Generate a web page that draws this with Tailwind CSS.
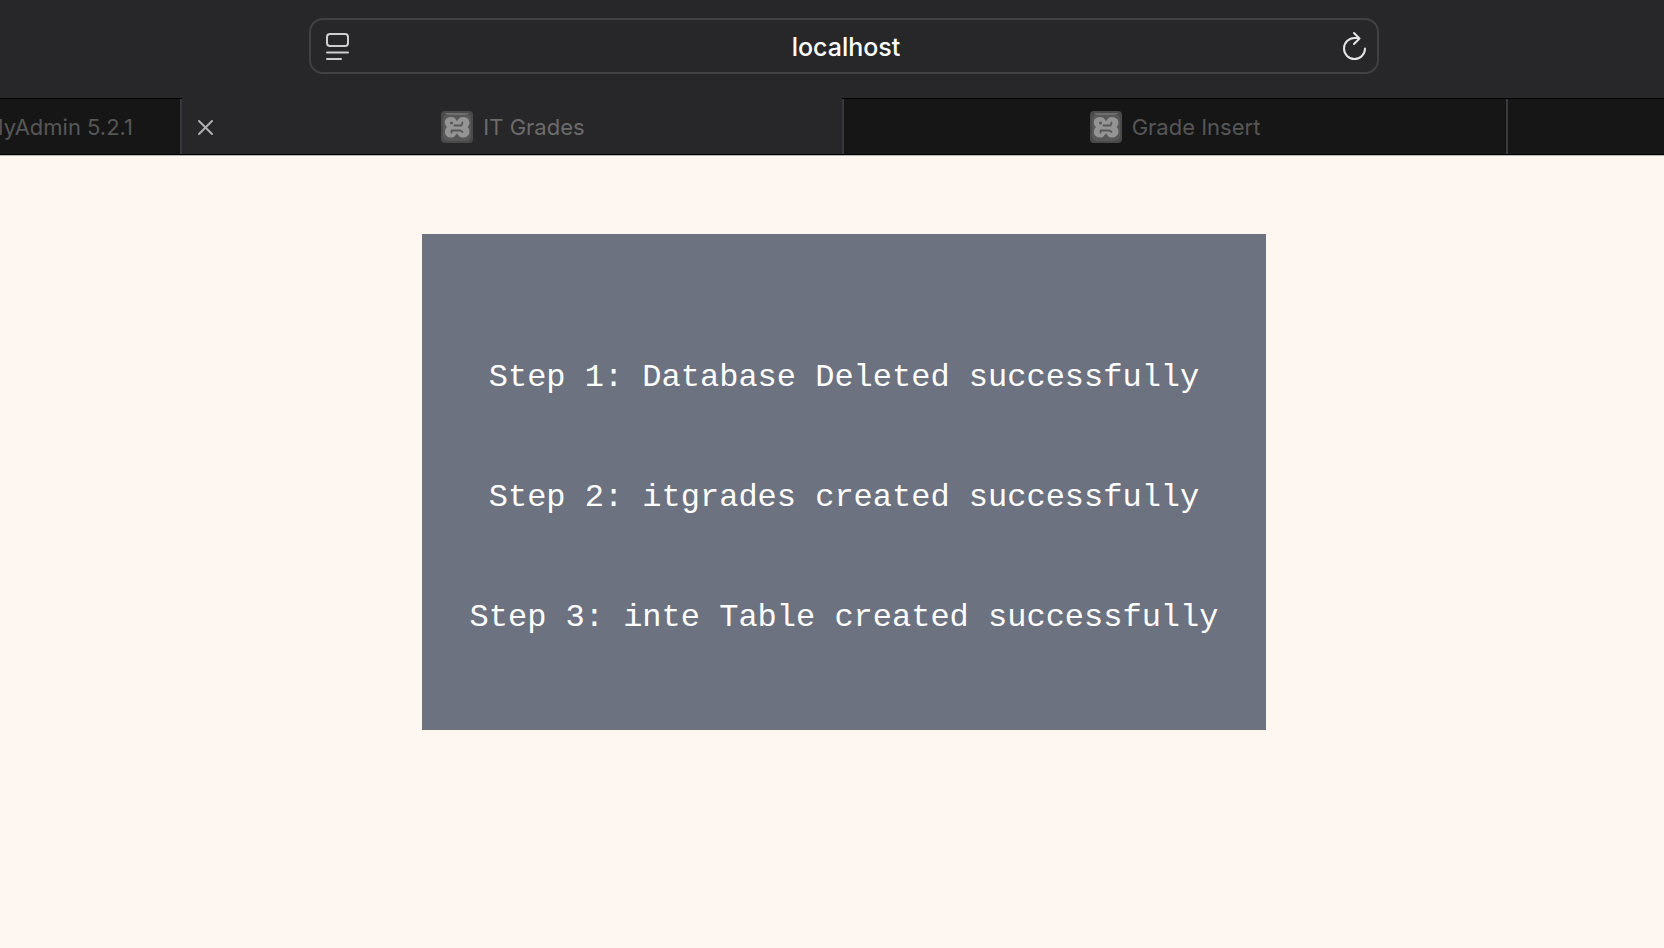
<!DOCTYPE html>
<html lang="en">
<head>
<meta charset="utf-8">
<title>IT Grades</title>
<script src="https://cdn.jsdelivr.net/npm/@tailwindcss/browser@4"></script>
</head>
<body class="bg-[#fef6f1] overflow-x-hidden min-h-screen font-['Inter',sans-serif]">
<svg class="hidden" aria-hidden="true">
  <symbol id="xampp" viewBox="0 0 32 32">
    <rect width="32" height="32" rx="4" fill="#4a4a4b"/>
    <rect x="2" y="3" width="28" height="27" rx="5" fill="#585859"/>
    <path d="M4 2H28Q27 4 24 4H8Q5 4 4 2Z" fill="#6e6e6f"/>
    <path d="M10 6C13.500 6 15 8 16 10.500C17 8 19 6 22 6C29 6 30 13 26.500 16C30 19 29 26.500 22 26.500C18.500 26.500 17.500 24.500 16 22C14.500 24.500 13.500 26.500 10 26.500C3 26.500 2.500 19 6 16C2.500 13 3 6 10 6Z" fill="#949495"/>
    <circle cx="10.500" cy="12" r="1.500" fill="#585859"/>
    <path d="M13.500 14.500H20.500L21.500 11.500M10.500 21.500V19.500H19.500L21.500 21" fill="none" stroke="#585859" stroke-width="1.800" stroke-linecap="round" stroke-linejoin="round"/>
  </symbol>
</svg>
<div class="w-[calc(100%+24px)]">
  <header class="bg-[#272729]">
    <div class="h-[98px] pt-[18px]">
      <form class="mx-auto w-[1070px] max-w-full h-14 rounded-[14px] border-2 border-[#414143] flex items-center justify-between pl-3 pr-2">
        <button type="button" aria-label="Page menu" class="size-8 flex items-center justify-center text-[#cfcfd0]">
          <svg width="32" height="32" viewBox="0 0 32 32" fill="none" stroke="currentColor" stroke-width="2" stroke-linecap="round"><rect x="4" y="4" width="21" height="12" rx="3"/><path d="M4 22.500H25M4 29H18"/></svg>
        </button>
        <input aria-label="Address" value="localhost" class="min-w-0 flex-1 pt-0.5 bg-transparent text-center text-white text-[25px] leading-8 font-medium outline-none">
        <button type="button" aria-label="Reload" class="size-8 flex items-center justify-center text-[#e4e4e5]">
          <svg width="32" height="32" viewBox="0 0 32 32" fill="none" stroke="currentColor" stroke-width="2" stroke-linecap="round" stroke-linejoin="round"><path d="M28 18.500A10.500 10.500 0 1 1 17.500 8H22M17 3L22.500 8.500L17 14"/></svg>
        </button>
      </form>
    </div>
    <nav aria-label="Tabs" class="flex h-[57px] border-b border-black text-[22px] leading-8">
      <a href="#" class="w-[180px] shrink-0 overflow-hidden border-t border-black bg-[#161616] text-[#565657] flex items-center justify-end pr-[47px] whitespace-nowrap">phpMyAdmin 5.2.1</a>
      <div class="w-0.5 bg-[#39393b] border-t border-black"></div>
      <div class="w-[660px] shrink-0 relative flex items-center justify-center pt-0.5 pl-0.5 text-[#6b6b6c]">
        <button type="button" aria-label="Close tab" class="absolute left-3 size-6 flex items-center justify-center text-[#b0b0b1]">
          <svg width="24" height="24" viewBox="0 0 24 24" fill="none" stroke="currentColor" stroke-width="2" stroke-linecap="round"><path d="M5 6L18 19M18 6L5 19"/></svg>
        </button>
        <a href="#" aria-current="page" class="flex items-center gap-2.5"><svg class="size-8"><use href="#xampp"/></svg>IT Grades</a>
      </div>
      <div class="w-0.5 bg-[#39393b] border-t border-black"></div>
      <a href="#" class="w-[662px] shrink-0 border-t border-black bg-[#161616] text-[#565657] flex items-center justify-center gap-2.5"><svg class="size-8"><use href="#xampp"/></svg>Grade Insert</a>
      <div class="w-0.5 bg-[#39393b] border-t border-black"></div>
      <div class="flex-1 border-t border-black bg-[#161616]"></div>
    </nav>
  </header>
  <main class="border-t border-[#bdb6b3] pt-[78px]">
    <section class="mx-auto w-1/2 bg-[#6c7280] pt-[126px] pb-[94px] flex flex-col gap-[84px] text-center text-white text-[32px] leading-9 font-['Courier_New','Liberation_Mono',monospace]">
      <p>Step 1: Database Deleted successfully</p>
      <p>Step 2: itgrades created successfully</p>
      <p>Step 3: inte Table created successfully</p>
    </section>
  </main>
</div>
</body>
</html>
